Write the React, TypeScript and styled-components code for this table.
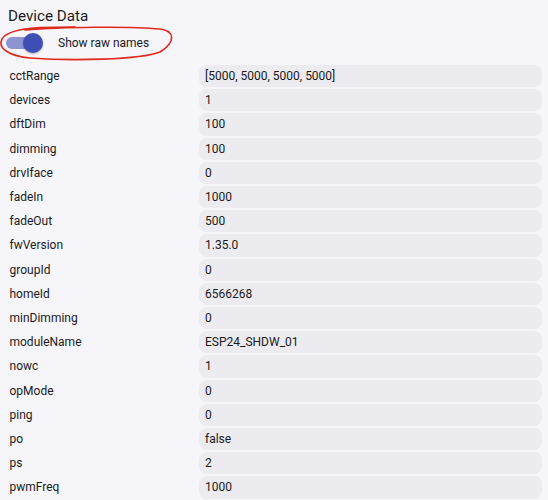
import React from "react";
import styled, { createGlobalStyle } from "styled-components";

const Global = createGlobalStyle`
  html, body { margin: 0; padding: 0; background: #f6f6fa; }
  body { font-family: Roboto, "Noto Sans", sans-serif; color: #1f1f1f; }
`;

const Page = styled.div`
  padding: 6px 6px 0 8px;
  display: flex;
  flex-direction: column;
`;

const Title = styled.h2`
  margin: 0;
  font-size: 15.2px;
  font-weight: 400;
  line-height: 20px;
  color: #1a1a1a;
`;

const ToggleRow = styled.div`
  position: relative;
  display: flex;
  align-items: center;
  height: 34px;
  margin-left: -2px;
  gap: 18px;
`;

const Track = styled.div`
  position: relative;
  width: 34px;
  height: 12px;
  border-radius: 6px;
  background: #8d94d1;
`;

const Thumb = styled.div`
  position: absolute;
  top: -4px;
  right: -3px;
  width: 20px;
  height: 20px;
  border-radius: 50%;
  background: #3f4fb3;
  box-shadow: 0 1px 2px rgba(0, 0, 0, 0.3);
`;

const ToggleLabel = styled.span`
  font-size: 12px;
  color: #1a1a1a;
`;

const Scribble = styled.svg`
  position: absolute;
  left: -6px;
  top: -6px;
  pointer-events: none;
`;

const Table = styled.div`
  display: grid;
  grid-template-columns: 191px 1fr;
  row-gap: 2px;
  margin-top: 5px;
`;

const Key = styled.div`
  font-size: 12px;
  line-height: 22.2px;
  padding-left: 1.5px;
  color: #1a1a1a;
`;

const Value = styled.div`
  font-size: 12px;
  line-height: 22.2px;
  padding-left: 6px;
  background: #ebebf0;
  border-radius: 8px;
  color: #1a1a1a;
`;

const rows: [string, string][] = [
  ["cctRange", "[5000, 5000, 5000, 5000]"],
  ["devices", "1"],
  ["dftDim", "100"],
  ["dimming", "100"],
  ["drvIface", "0"],
  ["fadeIn", "1000"],
  ["fadeOut", "500"],
  ["fwVersion", "1.35.0"],
  ["groupId", "0"],
  ["homeId", "6566268"],
  ["minDimming", "0"],
  ["moduleName", "ESP24_SHDW_01"],
  ["nowc", "1"],
  ["opMode", "0"],
  ["ping", "0"],
  ["po", "false"],
  ["ps", "2"],
  ["pwmFreq", "1000"],
];

export default function App() {
  return (
    <Page>
      <Global />
      <Title>Device Data</Title>
      <ToggleRow>
        <Track>
          <Thumb />
        </Track>
        <ToggleLabel>Show raw names</ToggleLabel>
        <Scribble width="180" height="45" viewBox="0 20 180 45">
          <path
            d="M25 30 C60 27 130 26 160 29 C175 31 176 42 160 52 C140 60 70 61 30 58 C8 56 0 48 1 42 C2 34 15 29 40 27.5 C55 27 65 27 75 27"
            fill="none"
            stroke="#e0271b"
            strokeWidth="1.6"
            strokeLinecap="round"
          />
        </Scribble>
      </ToggleRow>
      <Table>
        {rows.map(([k, v]) => (
          <React.Fragment key={k}>
            <Key>{k}</Key>
            <Value>{v}</Value>
          </React.Fragment>
        ))}
      </Table>
    </Page>
  );
}
